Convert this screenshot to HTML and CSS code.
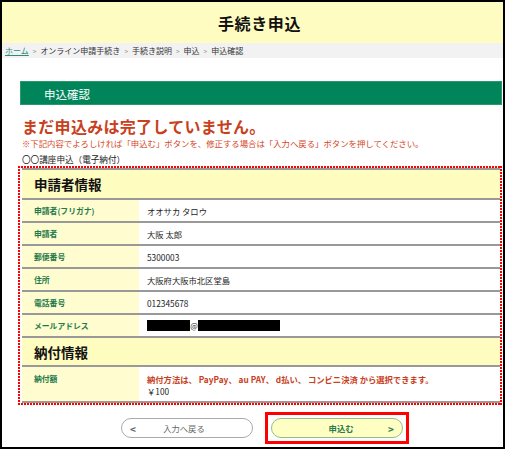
FILE: index.html
```html
<!DOCTYPE html>
<html lang="ja">
<head>
<meta charset="utf-8">
<title>手続き申込</title>
<link rel="stylesheet" href="styles.css">
</head>
<body>
<div class="frame">
  <header class="page-header"><h1>手続き申込</h1></header>
  <nav class="crumbs">
    <a href="#" class="home">ホーム</a><span class="sep">&gt;</span>オンライン申請手続き<span class="sep">&gt;</span>手続き説明<span class="sep">&gt;</span>申込<span class="sep">&gt;</span>申込確認
  </nav>
  <main class="content">
    <div class="bar">申込確認</div>
    <h2 class="warn">まだ申込みは完了していません。</h2>
    <p class="note">※下記内容でよろしければ「申込む」ボタンを、修正する場合は「入力へ戻る」ボタンを押してください。</p>
    <p class="course">〇〇講座申込（電子納付）</p>
    <div class="dotted">
      <div class="sec">申請者情報</div>
      <div class="row"><div class="lab">申請者(フリガナ)</div><div class="val">オオサカ タロウ</div></div>
      <div class="row"><div class="lab">申請者</div><div class="val">大阪 太郎</div></div>
      <div class="row"><div class="lab">郵便番号</div><div class="val">5300003</div></div>
      <div class="row"><div class="lab">住所</div><div class="val">大阪府大阪市北区堂島</div></div>
      <div class="row"><div class="lab">電話番号</div><div class="val">012345678</div></div>
      <div class="row"><div class="lab">メールアドレス</div><div class="val"><span class="mask m1"></span><span class="at">@</span><span class="mask m2"></span></div></div>
      <div class="sec sec2">納付情報</div>
      <div class="row tall"><div class="lab">納付額</div><div class="val"><div class="pay">納付方法は、 PayPay、 au PAY、 d払い、 コンビニ決済 から選択できます。</div><div>￥100</div></div></div>
    </div>
    <div class="buttons">
      <button class="btn back"><span class="arr">&lt;</span><span class="lbl">入力へ戻る</span></button>
      <div class="hilite"><button class="btn go"><span class="lbl">申込む</span><span class="arr">&gt;</span></button></div>
    </div>
  </main>
</div>
</body>
</html>
```
FILE: styles.css
```css
* { box-sizing: border-box; }
html, body { margin: 0; padding: 0; background: #fff; }
body { font-family: "Noto Sans CJK JP", "Noto Sans", sans-serif; color: #222; }
.frame {
  width: 505px; height: 449px; border: 2px solid #000; overflow: hidden; background: #fff;
}
.page-header {
  height: 41px; background: #fffcc2; display: flex; align-items: center; justify-content: center;
}
.page-header h1 { margin: 0; font-size: 16px; font-weight: 700; letter-spacing: 0.6px; color: #111; padding-left: 14px; }
.crumbs {
  height: 15px; background: #f2f2f2; font-size: 8px; line-height: 15px; color: #333; padding-left: 3px; white-space: nowrap;
}
.crumbs .home { color: #2c8b7c; text-decoration: underline; }
.crumbs .sep { color: #888; margin: 0 4px; font-size: 6.5px; }
.content { padding: 23px 1px 0 18px; }
.bar {
  height: 24px; background: #00855a; color: #fff; font-size: 11.5px; line-height: 24px; padding-left: 23px; border: 1px solid #2a9a6c;
}
.warn { margin: 13px 0 0 2px; font-size: 16px; line-height: 17px; font-weight: 700; color: #c8401c; letter-spacing: 0.3px; }
.note { margin: 3px 0 0 2px; font-size: 8.4px; line-height: 11px; color: #d4461f; }
.course { margin: 4px 0 0 2px; font-size: 8.6px; line-height: 12px; color: #222; }
.dotted {
  margin: 1px 0 0 -2px; padding: 2px 2px 2px 4px;
  background:
    repeating-linear-gradient(90deg, #f00 0 2px, transparent 2px 3px) top left / 100% 2px no-repeat,
    repeating-linear-gradient(90deg, #f00 0 2px, transparent 2px 3px) bottom left / 100% 2px no-repeat,
    repeating-linear-gradient(180deg, #f00 0 2px, transparent 2px 3px) top left / 2px 100% no-repeat,
    repeating-linear-gradient(180deg, #f00 0 2px, transparent 2px 3px) top right / 2px 100% no-repeat;
}
.sec {
  height: 30px; background: #fffcc0; border-top: 2px solid #999; font-size: 13.5px; font-weight: 700; line-height: 28px; padding-left: 12px; color: #111;
}
.sec2 { height: 29px; }
.row { display: flex; border-top: 2px solid #999; height: 23px; }
.row.tall { height: 38px; border-bottom: 2px solid #999; }
.lab {
  width: 117px; background: #fffdd0; color: #1e7a4c; font-weight: 700; font-size: 7.8px; padding-left: 12px; display: flex; align-items: center;
}
.val { flex: 1; font-size: 8.3px; padding-left: 8px; display: flex; align-items: center; color: #222; background: #fff; }
.tall .lab, .tall .val { align-items: flex-start; flex-direction: column; padding-top: 6px; }
.tall .lab { justify-content: flex-start; }
.tall .val div { line-height: 12px; }
.pay { color: #c8401c; font-weight: 700; }
.mask { display: inline-block; background: #000; height: 11px; }
.m1 { width: 43px; }
.m2 { width: 82px; }
.at { font-size: 8px; width: 8px; text-align: center; }
.buttons { display: flex; justify-content: center; gap: 12px; margin-top: 7px; padding-left: 8px; }
.btn {
  width: 132px; height: 20px; border-radius: 10px; font-family: inherit; font-size: 8.3px; display: flex; align-items: center; padding: 0 8px; cursor: pointer;
}
.btn .lbl { flex: 1; text-align: center; }
.btn .arr { font-size: 10px; font-weight: 700; }
.back { background: #fff; border: 1px solid #aaa; color: #666; margin-top: 6px; }
.back .lbl { padding-right: 12px; }
.go { background: #ffffc4; border: 1px solid #8cc08c; color: #2e7a52; font-weight: 700; }
.go .arr { color: #2e7a52; }
.go .lbl { padding-left: 14px; }
.hilite { border: 3px solid #f00; padding: 3px 3px; }
```
